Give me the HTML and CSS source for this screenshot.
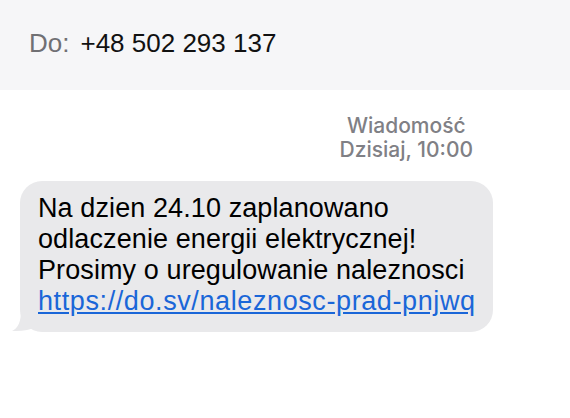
FILE: index.html
```html
<!DOCTYPE html>
<html lang="pl">

<head>
    <meta charset="UTF-8">
    <meta name="viewport" content="width=device-width, initial-scale=1.0">
    <title>Wiadomość</title>
    <link rel="stylesheet" href="styles.css">
</head>

<body>
    <div class="to-bar">
        <span class="to-label">Do:</span>
        <span class="to-number">+48 502 293 137</span>
    </div>

    <div class="thread">
        <div class="meta">
            <div class="meta-type">Wiadomość</div>
            <div class="meta-time">Dzisiaj, 10:00</div>
        </div>

        <div class="bubble">
            <p class="bubble-text">Na dzien 24.10 zaplanowano<br>odlaczenie energii elektrycznej!<br>Prosimy o uregulowanie naleznosci<br><a href="#" class="bubble-link">https://do.sv/naleznosc-prad-pnjwq</a></p>
            <svg class="bubble-tail" width="24" height="22" viewBox="0 0 24 22">
                <path d="M24 0 L24 17 C18 20 10 21.5 0 21 C6 18 9 12 9 0 Z" fill="#e9e9eb" />
            </svg>
        </div>
    </div>
</body>

</html>
```

FILE: styles.css
```css
body {
    margin: 0;
    background-color: #fff;
    font-family: "Liberation Sans", Arial, sans-serif;
    color: #000;
}

.to-bar {
    height: 90px;
    background-color: #f6f6f8;
    display: flex;
    align-items: center;
    padding-left: 29px;
    padding-bottom: 4px;
    box-sizing: border-box;
    font-size: 26px;
}

.to-label {
    color: #707074;
    margin-right: 11px;
}

.to-number {
    color: #111;
}

.thread {
    display: flex;
    flex-direction: column;
    padding-top: 24px;
}

.meta {
    align-self: flex-end;
    margin-right: 97px;
    text-align: center;
    color: #808085;
    font-family: Inter, "Liberation Sans", sans-serif;
    font-size: 21px;
    font-weight: 500;
    line-height: 24px;
}

.bubble {
    position: relative;
    margin: 19px 0 0 20px;
    width: 473px;
    box-sizing: border-box;
    padding: 12px 14px 15px 18px;
    background-color: #e9e9eb;
    border-radius: 22px;
}

.bubble-text {
    margin: 0;
    font-size: 27px;
    line-height: 31px;
    letter-spacing: 0.1px;
}

.bubble-link {
    color: #1a66d8;
    text-decoration: underline;
    letter-spacing: 0.6px;
    white-space: nowrap;
}

.bubble-tail {
    position: absolute;
    left: -8px;
    bottom: 0;
}
```
